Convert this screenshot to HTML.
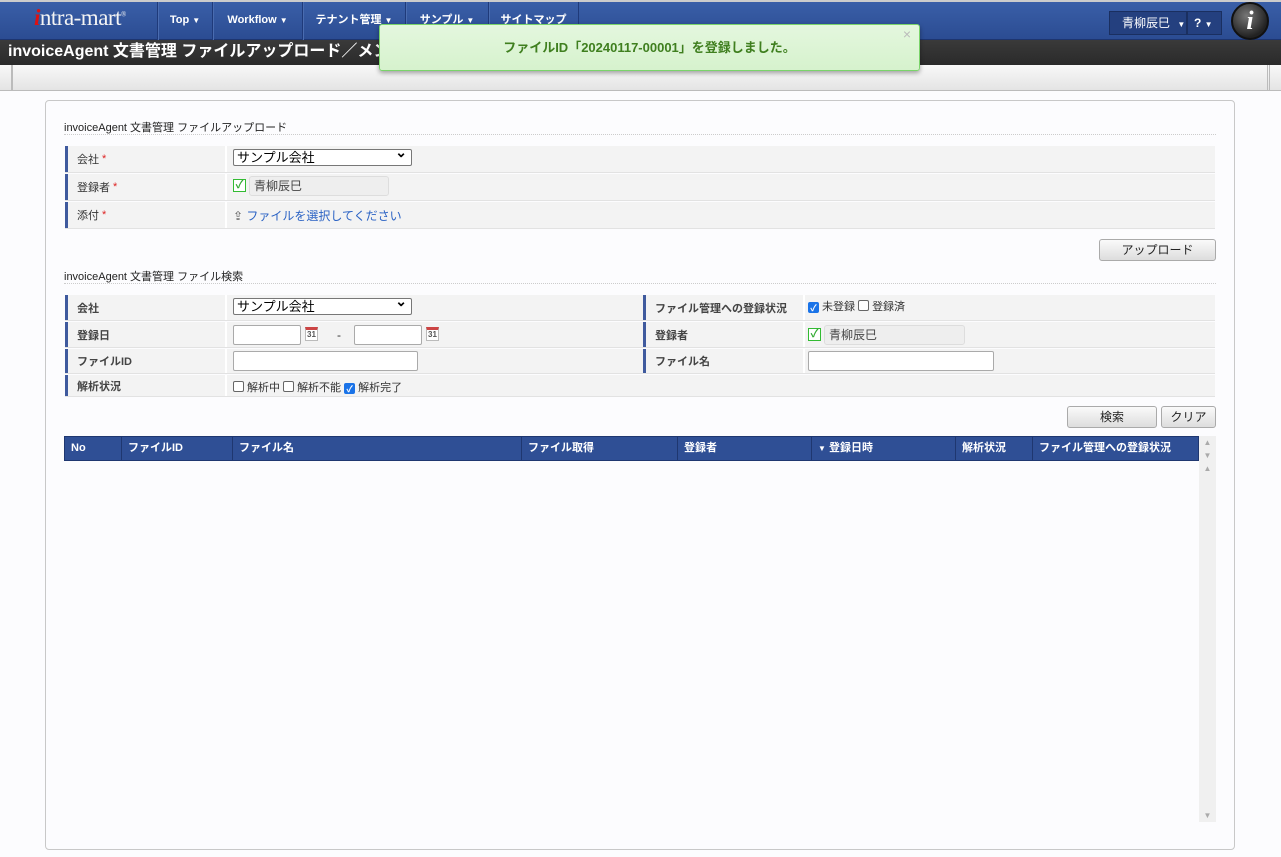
<!DOCTYPE html>
<html><head><meta charset="utf-8"><style>
*{box-sizing:border-box;margin:0;padding:0}
body{width:1281px;height:857px;overflow:hidden;background:#fcfcfe;font-family:"Liberation Sans","Noto Sans CJK JP",sans-serif;font-size:12px;color:#333;position:relative}
.abs{position:absolute}
#hdr{left:0;top:0;width:1281px;height:40px;background:linear-gradient(#3a5fa8,#2b4c92);border-top:2px solid #ccc;border-bottom:1px solid #1d3570}
.nav{top:0;height:38px;border-left:1px solid #1f3a7a;box-shadow:inset 1px 0 0 #4a6cb0;color:#fff;font-weight:bold;font-size:11px;line-height:36px;text-align:center}
.nav i{font-style:normal;font-size:8px;margin-left:3px}
#bar{left:0;top:40px;width:1281px;height:25px;background:linear-gradient(#3a3a3a,#2a2a2a);color:#fff;font-weight:bold;font-size:16px;line-height:24px;padding-left:8px}
#gbar{left:0;top:65px;width:1281px;height:26px;background:linear-gradient(#f8f8f8,#e4e4e4);border-bottom:1px solid #bbb}
#panel{left:45px;top:100px;width:1190px;height:750px;border:1px solid #c8c8c8;border-radius:4px;background:#fcfcfe}
.ttl{left:64px;width:1152px;height:16px;border-bottom:1px dotted #ccc;font-size:11px;color:#222}
.row{left:65px;width:1150px;background:#f3f3f3;border-bottom:1px solid #e2e2e2}
.lbl{position:absolute;left:0;top:0;bottom:0;width:162px;border-left:3px solid #3f5a9e;border-right:2px solid #fff;padding-left:9px;font-size:11px;display:flex;align-items:center}
.s .lbl{font-weight:bold;color:#444}
.lbl b{color:#d22;font-weight:normal;margin-left:3px}
.sel{position:absolute;height:17px;border:1px solid #777;border-radius:2px;background:#fff;font-size:13px;line-height:15px;padding-left:3px;color:#000}
.sel:after{content:"⌄";position:absolute;right:4px;top:-5px;font-size:14px;font-weight:bold}
.inp{position:absolute;height:20px;border:1px solid #aaa;border-radius:2px;background:#fff}
.ro{position:absolute;height:20px;border:1px solid #ddd;border-radius:3px;background:#eee;font-size:12px;line-height:18px;padding-left:4px;color:#444}
.gck{position:absolute;width:13px;height:13px;border:1.5px solid #3b3;background:#fff;color:#3a3;font-size:11px;line-height:10px;text-align:center;font-weight:bold}
.cb{display:inline-block;width:11px;height:11px;border:1px solid #666;border-radius:2px;background:#fff;vertical-align:-1px;margin-right:3px}
.cb.on{background:#1a73e8;border-color:#1a73e8;color:#fff;font-size:9px;line-height:10px;text-align:center;font-weight:bold}
.btn{position:absolute;height:22px;border:1px solid #aaa;border-radius:3px;background:linear-gradient(#fafafa,#ddd);font-size:12px;text-align:center;line-height:20px;color:#222}
.cal{position:absolute;width:13px;height:14px;border:1px solid #bbb;border-top:3px solid #c44;background:#fff;font-size:8px;font-weight:bold;text-align:center;line-height:10px;color:#555}
#th{left:64px;top:436px;width:1135px;height:25px;background:#2f4f95;border:1px solid #1f3770}
.th{position:absolute;top:0;height:23px;line-height:23px;color:#fff;font-weight:bold;font-size:11px;padding-left:6px;border-left:1px solid #1f3770}
</style></head><body>
<div id="hdr" class="abs">
<div class="abs" style="left:34px;top:3px;font-family:'Liberation Serif',serif;font-size:23px;color:#f4f4f4;letter-spacing:-0.5px"><span style="color:#d11;font-style:italic;font-weight:bold">i</span>ntra-mart<sup style="font-size:7px">®</sup></div>
<div class="nav abs" style="left:157px;width:55px">Top<i>▼</i></div>
<div class="nav abs" style="left:212px;width:90px">Workflow<i>▼</i></div>
<div class="nav abs" style="left:302px;width:103px">テナント管理<i>▼</i></div>
<div class="nav abs" style="left:405px;width:83px">サンプル<i>▼</i></div>
<div class="nav abs" style="left:488px;width:91px;border-right:1px solid #1f3a7a">サイトマップ</div>
<div class="abs" style="left:1109px;top:9px;width:78px;height:24px;background:#24407f;border:1px solid #1a2f60;color:#fff;font-size:12px;line-height:22px;padding-left:12px">青柳辰巳 <span style="font-size:8px;margin-left:4px">▼</span></div>
<div class="abs" style="left:1187px;top:9px;width:35px;height:24px;background:#24407f;border:1px solid #1a2f60;color:#fff;font-weight:bold;font-size:12px;line-height:22px;padding-left:6px">? <span style="font-size:8px">▼</span></div>
<div class="abs" style="left:1231px;top:0px;width:38px;height:38px;border-radius:50%;background:radial-gradient(circle at 40% 35%,#777,#222 70%);border:2px solid #111;color:#fff;font-family:'Liberation Serif',serif;font-style:italic;font-weight:bold;font-size:26px;text-align:center;line-height:34px">i</div>
</div>
<div id="bar" class="abs">invoiceAgent 文書管理 ファイルアップロード／メンテ</div>
<div id="gbar" class="abs"><div class="abs" style="left:11px;top:0;width:2px;height:25px;border-left:1px solid #bbb;border-right:1px solid #bbb"></div><div class="abs" style="left:1267px;top:0;width:3px;height:25px;border-left:1px solid #bbb;border-right:1px solid #bbb"></div></div>
<div class="abs" style="left:379px;top:24px;width:541px;height:47px;background:linear-gradient(#e4f7de,#d6f2cd);border:1px solid #7ad46a;border-radius:3px;box-shadow:0 2px 5px rgba(0,0,0,.35);color:#3f7f1f;font-size:13px;font-weight:bold;text-align:center;line-height:45px">ファイルID「20240117-00001」を登録しました。<span class="abs" style="right:8px;top:-13px;color:#bbb;font-size:14px;font-weight:normal">×</span></div>
<div id="panel" class="abs"></div>

<div class="ttl abs" style="top:119px">invoiceAgent 文書管理 ファイルアップロード</div>
<div class="row abs" style="top:146px;height:27px"><div class="lbl">会社<b>*</b></div><div class="sel" style="left:168px;top:3px;width:179px">サンプル会社</div></div>
<div class="row abs" style="top:174px;height:27px"><div class="lbl">登録者<b>*</b></div><div class="gck" style="left:168px;top:5px">✓</div><div class="ro" style="left:184px;top:2px;width:140px">青柳辰巳</div></div>
<div class="row abs" style="top:202px;height:27px"><div class="lbl">添付<b>*</b></div><div class="abs" style="left:168px;top:5px;font-size:12px;color:#2a62c4"><span style="color:#555">⇪</span> ファイルを選択してください</div></div>
<div class="btn" style="left:1099px;top:239px;width:117px">アップロード</div>

<div class="ttl abs" style="top:268px">invoiceAgent 文書管理 ファイル検索</div>
<div class="s">
<div class="row abs" style="top:295px;height:26px"><div class="lbl">会社</div><div class="sel" style="left:168px;top:3px;width:179px">サンプル会社</div>
<div class="lbl" style="left:578px">ファイル管理への登録状況</div><div class="abs" style="left:743px;top:3px;font-size:11px"><span class="cb on">✓</span>未登録 <span class="cb"></span>登録済</div></div>
<div class="row abs" style="top:322px;height:26px"><div class="lbl">登録日</div><div class="inp" style="left:168px;top:3px;width:68px"></div><div class="cal" style="left:240px;top:5px">31</div><div class="abs" style="left:272px;top:6px">-</div><div class="inp" style="left:289px;top:3px;width:68px"></div><div class="cal" style="left:361px;top:5px">31</div>
<div class="lbl" style="left:578px">登録者</div><div class="gck" style="left:743px;top:6px">✓</div><div class="ro" style="left:759px;top:3px;width:141px">青柳辰巳</div></div>
<div class="row abs" style="top:349px;height:25px"><div class="lbl">ファイルID</div><div class="inp" style="left:168px;top:2px;width:185px"></div>
<div class="lbl" style="left:578px">ファイル名</div><div class="inp" style="left:743px;top:2px;width:186px"></div></div>
<div class="row abs" style="top:375px;height:22px"><div class="lbl">解析状況</div><div class="abs" style="left:168px;top:4px;font-size:11px"><span class="cb"></span>解析中 <span class="cb"></span>解析不能 <span class="cb on">✓</span>解析完了</div></div>
</div>
<div class="btn" style="left:1067px;top:406px;width:90px">検索</div>
<div class="btn" style="left:1161px;top:406px;width:55px">クリア</div>

<div id="th" class="abs">
<div class="th" style="left:0;border:0">No</div>
<div class="th" style="left:56px">ファイルID</div>
<div class="th" style="left:167px">ファイル名</div>
<div class="th" style="left:456px">ファイル取得</div>
<div class="th" style="left:612px">登録者</div>
<div class="th" style="left:746px"><span style="font-size:8px">▼</span> 登録日時</div>
<div class="th" style="left:890px">解析状況</div>
<div class="th" style="left:967px">ファイル管理への登録状況</div>
</div>
<div class="abs" style="left:1199px;top:436px;width:17px;height:386px;background:#f0f0f0;color:#aaa;font-size:8px;text-align:center;line-height:13px">▲<br>▼<br>▲<div class="abs" style="bottom:0;width:17px">▼</div></div>
</body></html>
